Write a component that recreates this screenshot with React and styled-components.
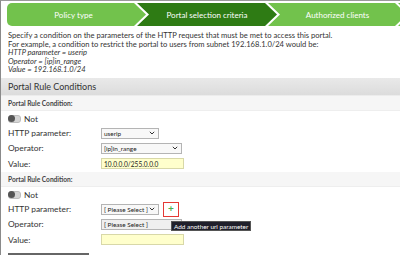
import React from 'react';
import styled, { createGlobalStyle } from 'styled-components';

const GlobalStyle = createGlobalStyle`
  html, body {
    margin: 0;
    padding: 0;
    background: #fff;
    font-family: Lato, "Open Sans", sans-serif;
    color: #333;
  }
`;

const Page = styled.div`
  width: 400px;
  height: 255px;
  box-sizing: border-box;
  border-top: 1px solid #9a9a9a;
  border-left: 1px solid #8a8a8a;
  overflow: hidden;
  position: relative;
`;

const Steps = styled.div`
  display: flex;
  padding: 2px 0 0 6px;
  height: 23px;
`;

const Step = styled.div`
  flex: 0 0 ${p => p.$w}px;
  height: 23px;
  display: flex;
  align-items: center;
  justify-content: center;
  padding-right: ${p => (p.$first ? 6 : 0)}px;
  box-sizing: border-box;
  background: ${p => (p.$active ? '#2e7b14' : '#72c24c')};
  color: #fff;
  font-size: 8px;
  border-radius: ${p => (p.$first ? '5px 0 0 5px' : '0')};
  clip-path: ${p =>
    p.$first
      ? 'polygon(0 0, calc(100% - 12px) 0, 100% 50%, calc(100% - 12px) 100%, 0 100%)'
      : 'polygon(0 0, calc(100% - 12px) 0, 100% 50%, calc(100% - 12px) 100%, 0 100%, 12px 50%)'};
  margin-right: -9px;
`;

const Description = styled.div`
  padding: 5px 7px 4px;
  font-size: 7.6px;
  line-height: 8.5px;
  color: #333;
  em {
    display: block;
  }
`;

const SectionHeader = styled.div`
  height: 17px;
  line-height: 17px;
  padding-left: 7px;
  font-size: 9px;
  color: #333;
  background: linear-gradient(#e9e9e9, #dcdcdc);
  border-bottom: 1px solid #ececec;
`;

const GroupHeader = styled.div`
  height: 14px;
  line-height: 14px;
  padding-left: 7px;
  font-size: 6.6px;
  font-weight: bold;
  color: #444;
  background: #f6f6f6;
  border-bottom: 1px solid #eeeeee;
`;

const Group = styled.div`
  padding-top: 1px;
`;

const Row = styled.div`
  display: flex;
  align-items: center;
  height: ${p => p.$h || 15}px;
  padding-left: 7px;
`;

const Label = styled.div`
  width: 93px;
  font-size: 8.4px;
  color: #333;
`;

const Toggle = styled.span`
  position: relative;
  display: inline-block;
  width: 11px;
  height: 6px;
  border-radius: 3px;
  background: #d5d5d5;
  border: 1px solid #bdbdbd;
  margin-right: 3px;
  &::after {
    content: "";
    position: absolute;
    left: -1px;
    top: -1px;
    width: 7px;
    height: 7px;
    border-radius: 50%;
    background: #555;
  }
`;

const NotLabel = styled.span`
  display: flex;
  align-items: center;
  font-size: 8.4px;
  color: #333;
`;

const Select = styled.div`
  width: ${p => p.$w}px;
  height: 11px;
  box-sizing: border-box;
  border: 1px solid #b4b4b4;
  background: ${p => (p.$muted ? '#efefef' : '#f8f8f8')};
  font-size: 6.4px;
  color: #222;
  white-space: nowrap;
  overflow: hidden;
  display: flex;
  align-items: center;
  justify-content: space-between;
  padding: 0 3px 0 2px;
`;

const Chevron = () => (
  <svg width="6" height="4" viewBox="0 0 6 4" style={{ flexShrink: 0 }}>
    <path d="M0.8 0.8 L3 3 L5.2 0.8" fill="none" stroke="#333" strokeWidth="1" />
  </svg>
);

const Input = styled.div`
  width: 83px;
  height: 11px;
  box-sizing: border-box;
  border: 1px solid #d8d8a8;
  background: #ffffcc;
  font-size: 6.6px;
  color: #222;
  display: flex;
  align-items: center;
  padding-left: 2px;
`;

const AddWrap = styled.div`
  position: relative;
  margin-left: 4px;
`;

const AddButton = styled.div`
  width: 16px;
  height: 15px;
  box-sizing: border-box;
  border: 1px solid #e53935;
  display: flex;
  align-items: center;
  justify-content: center;
  color: #4caf50;
  font-size: 10px;
  font-weight: bold;
  line-height: 1;
  padding-bottom: 2px;
`;

const Tooltip = styled.div`
  position: absolute;
  left: 8px;
  top: 19px;
  white-space: nowrap;
  background: #1f1f2b;
  color: #fff;
  font-size: 6.4px;
  padding: 1px 2px;
  height: 10px;
  line-height: 8px;
  box-sizing: border-box;
  border: 1px solid #555;
  z-index: 5;
`;

const Footer = styled.div`
  padding: 5px 7px 0;
`;

const SaveButton = styled.div`
  width: 81px;
  height: 14px;
  background: #f0f0f0;
  border-top: 2px solid #666;
`;

const App = () => {
  return (
    <>
      <GlobalStyle />
      <Page>
        <Steps>
          <Step $first $w={139}>Policy type</Step>
          <Step $active $w={140}>Portal selection criteria</Step>
          <Step $w={139}>Authorized clients</Step>
          <Step $w={40}></Step>
        </Steps>
        <Description>
          Specify a condition on the parameters of the HTTP request that must be met to access this portal.
          <br />
          For example, a condition to restrict the portal to users from subnet 192.168.1.0/24 would be:
          <em>HTTP parameter = userip</em>
          <em>Operator = [ip]in_range</em>
          <em>Value = 192.168.1.0/24</em>
        </Description>
        <SectionHeader>Portal Rule Conditions</SectionHeader>
        <GroupHeader>Portal Rule Condition:</GroupHeader>
        <Group>
          <Row $h={14}>
            <NotLabel><Toggle />Not</NotLabel>
          </Row>
          <Row>
            <Label>HTTP parameter:</Label>
            <Select $w={58}>userip<Chevron /></Select>
          </Row>
          <Row>
            <Label>Operator:</Label>
            <Select $w={81}>[ip]in_range<Chevron /></Select>
          </Row>
          <Row $h={16}>
            <Label>Value:</Label>
            <Input>10.0.0.0/255.0.0.0</Input>
          </Row>
        </Group>
        <GroupHeader>Portal Rule Condition:</GroupHeader>
        <Group>
          <Row $h={14}>
            <NotLabel><Toggle />Not</NotLabel>
          </Row>
          <Row>
            <Label>HTTP parameter:</Label>
            <Select $w={58}>[ Please Select ]<Chevron /></Select>
            <AddWrap>
              <AddButton>+</AddButton>
              <Tooltip>Add another uri parameter</Tooltip>
            </AddWrap>
          </Row>
          <Row>
            <Label>Operator:</Label>
            <Select $w={81} $muted>[ Please Select ]<span /></Select>
          </Row>
          <Row $h={16}>
            <Label>Value:</Label>
            <Input />
          </Row>
        </Group>
        <Footer>
          <SaveButton />
        </Footer>
      </Page>
    </>
  );
};

export default App;
